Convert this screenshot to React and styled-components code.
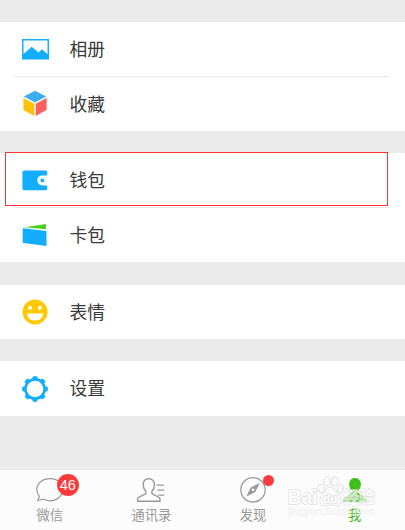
import styled, { createGlobalStyle } from "styled-components";


export default function App(){
    return(
        <Screen>
        <GlobalStyle/>
        <List>
            <Group>
                <Item icon={<AlbumSVG/>} label="相册"/>
                <Divider/>
                <Item icon={<CubeSVG/>} label="收藏"/>
            </Group>
            <Group>
                <Item icon={<WalletSVG/>} label="钱包" marked/>
                <Divider/>
                <Item icon={<CardsSVG/>} label="卡包"/>
            </Group>
            <Group>
                <Item icon={<SmileSVG/>} label="表情"/>
            </Group>
            <Group>
                <Item icon={<GearSVG/>} label="设置"/>
            </Group>
        </List>
        <TabBar>
            <Tab><IconBox><ChatSVG/><Badge>46</Badge></IconBox>微信</Tab>
            <Tab><IconBox><ContactsSVG/></IconBox>通讯录</Tab>
            <Tab><IconBox><CompassSVG/><Dot/></IconBox>发现</Tab>
            <Tab $active><IconBox><MeSVG/></IconBox>我</Tab>
            <Watermark/>
        </TabBar>
        </Screen>
    )
}

function Item({ icon, label, marked }){
    return(
        <Row>
            <IconSlot>{icon}</IconSlot>
            <Label>{label}</Label>
            {marked && <Frame/>}
        </Row>
    )
}

function AlbumSVG(){
    return(
        <svg width="27" height="21" viewBox="0 0 27 21">
            <rect x="0.75" y="0.75" width="25.5" height="19" fill="#fff" stroke="#17aefc" strokeWidth="1.5"/>
            <path d="M1 15.5L9.7 7.8L16.6 13.6L19.8 10.2L26 15.5V20H1Z" fill="#12adff"/>
        </svg>
    )
}

function CubeSVG(){
    return(
        <svg width="26" height="27" viewBox="0 0 26 27">
            <path d="M13 0.8L24.2 6.5L13 12.6L1.8 6.5Z" fill="#3aaeef"/>
            <path d="M1.4 8L12.3 13.8V26L1.4 20Z" fill="#ffc20a"/>
            <path d="M24.6 8L13.7 13.8V26L24.6 20Z" fill="#fc6161"/>
        </svg>
    )
}

function WalletSVG(){
    return(
        <svg width="26" height="21" viewBox="0 0 26 21">
            <path d="M2 0.4H23.6Q25.2 0.4 25.2 2V5.4H20.3A5 5 0 0 0 20.3 15.4H25.2V18.4Q25.2 20.2 23.6 20.2H2Q0.4 20.2 0.4 18.4V2Q0.4 0.4 2 0.4Z" fill="#12adff"/>
            <circle cx="20.4" cy="10.4" r="1.9" fill="#12adff"/>
        </svg>
    )
}

function CardsSVG(){
    return(
        <svg width="26" height="24" viewBox="0 0 26 24">
            <path d="M2.5 4.2L24 1V6.2Z" fill="#47d120"/>
            <path d="M1.6 5.2L24.5 7.9V23L1.6 20Q0.7 19.8 0.7 19V6Q0.7 5.1 1.6 5.2Z" fill="#12adff"/>
        </svg>
    )
}

function SmileSVG(){
    return(
        <svg width="26" height="26" viewBox="0 0 26 26">
            <circle cx="13" cy="13" r="12.5" fill="#ffc800"/>
            <circle cx="8" cy="8.8" r="2" fill="#fff"/>
            <circle cx="18" cy="8.8" r="2" fill="#fff"/>
            <path d="M4.8 14.4H21.2Q20 21.6 13 21.6T4.8 14.4Z" fill="#fff"/>
        </svg>
    )
}

function GearSVG(){
    const angles = [0, 45, 90, 135, 180, 225, 270, 315]
    return(
        <svg width="26" height="26" viewBox="0 0 26 26">
            <circle cx="13" cy="13" r="9.6" fill="none" stroke="#12adff" strokeWidth="2.6"/>
            {angles.map(a => (
                <path key={a} d="M10 3.6L11 0.2H15L16 3.6Z" fill="#12adff" transform={`rotate(${a} 13 13)`}/>
            ))}
        </svg>
    )
}

function ChatSVG(){
    return(
        <svg width="30" height="28" viewBox="0 0 30 28">
            <path d="M15 2.6C22.3 2.6 27.7 7.3 27.7 13.6S22.3 24.8 15 24.8C12.4 24.8 10.2 24.3 8.2 23.1L2.8 24.5L4.4 20.3C2.7 18.4 1.8 16.2 1.8 13.6C1.8 7.3 7.7 2.6 15 2.6Z" fill="none" stroke="#999" strokeWidth="1.2"/>
        </svg>
    )
}

function ContactsSVG(){
    return(
        <svg width="30" height="28" viewBox="0 0 30 28">
            <path d="M12.8 2.8C9.2 2.8 7.2 5.4 7.2 8.7C7.2 11.7 8.6 14 9.8 15.2V17.5C8 19.5 1.6 20.4 1.6 23V25.2H24V23C24 20.4 17.8 19.5 15.9 17.5V15.2C17.2 14 18.5 11.7 18.5 8.7C18.5 5.4 16.4 2.8 12.8 2.8Z" fill="none" stroke="#999" strokeWidth="1.4"/>
            <path d="M20.6 9.2H28.2M21.6 14.2H28.2M22.4 19.2H28.2" stroke="#999" strokeWidth="1.2"/>
        </svg>
    )
}

function CompassSVG(){
    return(
        <svg width="30" height="28" viewBox="0 0 30 28">
            <circle cx="15" cy="13.8" r="12.2" fill="none" stroke="#999" strokeWidth="1.3"/>
            <path d="M21.8 7L17.3 16.1L8.4 20.4L12.7 11.5Z" fill="#999"/>
            <circle cx="15" cy="13.8" r="1.4" fill="#fcfcfc"/>
        </svg>
    )
}

function MeSVG(){
    return(
        <svg width="30" height="28" viewBox="0 0 30 28">
            <path d="M15 2C11.4 2 9.2 4.7 9.2 8.3C9.2 11.6 10.7 14 12.2 15.4V16.8C10.6 18.3 3.3 20.3 3.3 25.7H26.9C26.9 20.3 19.4 18.3 17.8 16.8V15.4C19.4 14 20.9 11.6 20.9 8.3C20.9 4.7 18.6 2 15 2Z" fill="#3fbf1a"/>
        </svg>
    )
}

function Watermark(){
    return(
        <WatermarkSVG width="96" height="46" viewBox="0 0 96 46">
            <g fill="#fdfdfd" stroke="#e0e0e0" strokeWidth="1">
                <ellipse cx="33" cy="12.5" rx="3" ry="4.2" transform="rotate(-15 33 12.5)"/>
                <ellipse cx="39.2" cy="5.2" rx="3.2" ry="4.6"/>
                <ellipse cx="46.8" cy="5.6" rx="3" ry="4.5" transform="rotate(10 46.8 5.6)"/>
                <ellipse cx="52.4" cy="13" rx="2.9" ry="4.2" transform="rotate(15 52.4 13)"/>
                <path d="M42.4 11.5C38 11.5 37 15.5 34.5 18.5C30.5 22.5 31 29.5 36.5 29.5C39 29.5 40.5 28.8 42.6 28.8C45 28.8 46.5 29.5 49 29.5C54 29.5 54.500 22.5 50.500 18.5C48 15.5 47 11.5 42.4 11.5Z"/>
            </g>
            <Mark x="0" y="28" fontSize="20.5" textLength="29.5" lengthAdjust="spacingAndGlyphs">Bai</Mark>
            <Mark x="35" y="26.5" fontSize="12" textLength="14.5" lengthAdjust="spacingAndGlyphs">du</Mark>
            <Mark x="55.5" y="27" fontSize="15.5" textLength="31" $light>经验</Mark>
            <Mark x="0" y="39" fontSize="10.5" $small textLength="87">jingyan.baidu.com</Mark>
        </WatermarkSVG>
    )
}

const GlobalStyle = createGlobalStyle`
    body{
        margin: 0;
        background: #ebebeb;
        font-family: "Liberation Sans", "Noto Sans CJK SC", sans-serif;
    }
`

const Screen = styled.div`
    display: flex;
    flex-direction: column;
    width: 405px;
    height: 530px;
    overflow: hidden;
    background: #ebebeb;
`

const List = styled.div`
    flex: 1;
    display: flex;
    flex-direction: column;
    gap: 22.3px;
    padding-top: 22px;
`

const Group = styled.div`
    background: #fff;
`

const Row = styled.div`
    position: relative;
    display: flex;
    align-items: center;
    height: 54.5px;
`

const IconSlot = styled.div`
    display: flex;
    justify-content: center;
    width: 70px;
    svg{
        display: block;
    }
`

const Label = styled.span`
    margin-left: -0.6px;
    padding-top: 1.6px;
    font-size: 17.8px;
    line-height: 26px;
    color: #3a3a3a;
`

const Divider = styled.div`
    height: 1px;
    margin: -1px 15px 0 14px;
    background: #e6e6e6;
`

const Frame = styled.div`
    position: absolute;
    top: -1px;
    left: 5px;
    width: 383px;
    height: 54px;
    box-sizing: border-box;
    border: 1px solid #fa3434;
`

const TabBar = styled.div`
    position: relative;
    display: flex;
    height: 60px;
    background: #fcfcfc;
`

const Tab = styled.div`
    display: flex;
    flex-direction: column;
    align-items: center;
    width: 101.6px;
    flex-shrink: 0;
    padding-top: 6px;
    box-sizing: border-box;
    font-size: 13.3px;
    line-height: 20px;
    color: ${props => props.$active ? '#3fbf1a' : '#999'};
    &:first-child{
        margin-left: -1px;
    }
`

const IconBox = styled.div`
    position: relative;
    height: 30px;
    svg{
        display: block;
    }
`

const Badge = styled.span`
    position: absolute;
    top: -2px;
    left: 22px;
    width: 22px;
    height: 22px;
    border-radius: 50%;
    background: #fb3b3b;
    color: #fff;
    font-size: 14.5px;
    line-height: 22px;
    text-align: center;
`

const Dot = styled.span`
    position: absolute;
    top: -1px;
    left: 25px;
    width: 11px;
    height: 11px;
    border-radius: 50%;
    background: #fb3b3b;
`

const WatermarkSVG = styled.svg`
    position: absolute;
    top: 6px;
    left: 288px;
`

const Mark = styled.text`
    font-weight: ${props => props.$small ? 400 : 700};
    fill: ${props => props.$small ? '#f4f4f4' : '#fdfdfd'};
    stroke: ${props => props.$small ? '#ebebeb' : '#e0e0e0'};
    stroke-width: ${props => props.$small ? '0.7px' : '1.6px'};
    opacity: ${props => props.$small ? 0.6 : props.$light ? 0.75 : 1};
    paint-order: stroke;
`
